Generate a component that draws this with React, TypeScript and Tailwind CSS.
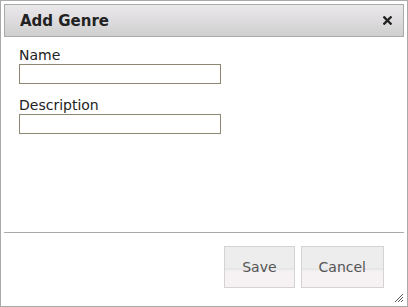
import React from 'react';

const font = { fontFamily: '"DejaVu Sans", Verdana, sans-serif' };

const DialogButton: React.FC<{ label: string }> = ({ label }) => (
  <button
    type="button"
    className="h-[42px] px-[17px] border border-[#d3d3d3] text-[14px] leading-none text-[#555] bg-[linear-gradient(to_bottom,#ededed_0%,#ededed_52%,#e3e3e3_55%,#f6f2f4_60%,#f6f2f4_100%)]"
  >
    {label}
  </button>
);

const Field: React.FC<{ label: string; className?: string }> = ({ label, className }) => (
  <div className={className}>
    <label className="block text-[14px] leading-[17px] text-[#222]">{label}</label>
    <input type="text" className="block w-[202px] h-[20px] border border-[#8d8772] bg-white outline-none" />
  </div>
);

const ResizeGrip: React.FC = () => (
  <svg width="12" height="12" viewBox="0 0 12 12" className="absolute right-[3px] bottom-[3px]">
    <path d="M11 3 L3 11 M11 6 L6 11 M11 9 L9 11" stroke="#555" strokeWidth="1" />
  </svg>
);

const CloseIcon: React.FC = () => (
  <svg width="9" height="9" viewBox="0 0 9 9">
    <path d="M1.3 1.3 L7.7 7.7 M7.7 1.3 L1.3 7.7" stroke="#222" strokeWidth="2.3" strokeLinecap="square" />
  </svg>
);

const App: React.FC = () => {
  return (
    <div
      style={font}
      className="relative w-[408px] h-[307px] border border-[#aaa] bg-white p-[3px] flex flex-col"
    >
      <div className="h-[33px] shrink-0 border border-[#aaa] bg-[linear-gradient(to_bottom,#ebe8ec,#cfcfcf)] flex items-center justify-between pl-[15px] pr-[11px]">
        <span className="text-[15px] font-bold text-[#222] pt-[1px]">Add Genre</span>
        <CloseIcon />
      </div>

      <div className="flex-1 px-[15px] pt-[10px]">
        <Field label="Name" />
        <Field label="Description" className="mt-[13px]" />
      </div>

      <div className="h-[71px] shrink-0 border-t border-[#aaa] flex justify-end items-start gap-[6px] pt-[13px] pr-[20px]">
        <DialogButton label="Save" />
        <DialogButton label="Cancel" />
      </div>

      <ResizeGrip />
    </div>
  );
};

export default App;
